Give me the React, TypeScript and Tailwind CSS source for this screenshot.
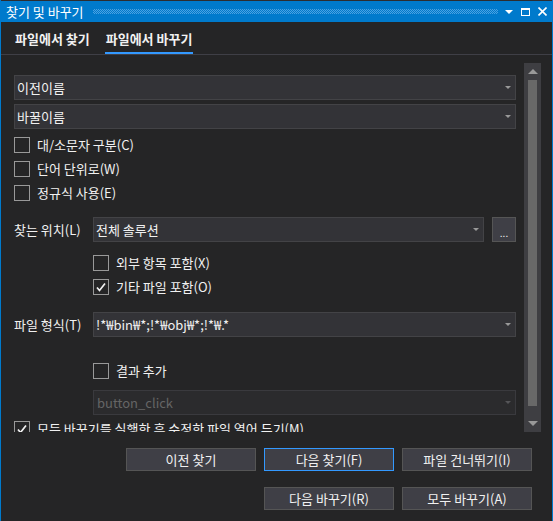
import React from 'react';

const font = "font-['Noto_Sans_CJK_KR','Noto_Sans',sans-serif]";

function Arrow({ disabled }: { disabled?: boolean }) {
  return (
    <span
      className={`h-0 w-0 border-x-[3px] border-t-[3px] border-x-transparent ${
        disabled ? 'border-t-[#555558]' : 'border-t-[#999999]'
      }`}
    />
  );
}

function Combo({ value, className = '', disabled }: { value: string; className?: string; disabled?: boolean }) {
  return (
    <div
      className={`flex h-[25px] shrink-0 items-center justify-between border pl-[2px] pr-[4px] ${
        disabled ? 'border-[#3a3a3e] bg-[#2b2b2d] text-[#656565]' : 'border-[#434346] bg-[#333337] text-[#f1f1f1]'
      } ${className}`}
    >
      <span className="whitespace-nowrap leading-[16px]">{value}</span>
      <Arrow disabled={disabled} />
    </div>
  );
}

function Check({ label, checked }: { label: string; checked?: boolean }) {
  return (
    <div className="flex h-[24px] shrink-0 items-center gap-[7px]">
      <span className="flex h-4 w-4 shrink-0 items-center justify-center border border-[#999999]">
        {checked && (
          <svg width="12" height="12" viewBox="0 0 12 12" fill="none">
            <path d="M2 6.5 L4.5 9.5 L10 2.5" stroke="#f1f1f1" strokeWidth="1.7" />
          </svg>
        )}
      </span>
      <span className="whitespace-nowrap leading-[16px]">{label}</span>
    </div>
  );
}

function Btn({ label, focused }: { label: string; focused?: boolean }) {
  return (
    <button
      className={`flex h-[23px] w-[130px] items-center justify-center border bg-[#3f3f46] leading-[16px] text-[#f1f1f1] ${
        focused ? 'border-[#3399ff]' : 'border-[#555555]'
      }`}
    >
      {label}
    </button>
  );
}

export default function App() {
  return (
    <div className={`${font} flex h-[521px] w-[553px] flex-col overflow-hidden border-x border-[#007acc] bg-[#252526] text-[13px] text-[#f1f1f1]`}>
      <div className="h-px shrink-0 bg-[#2d2d30]" />

      {/* title bar */}
      <div className="flex h-[21px] shrink-0 items-center bg-[#007acc] pl-[5px] pr-[5px] text-white">
        <span className="leading-[16px]">찾기 및 바꾸기</span>
        <div className="ml-[9px] mr-[7px] h-[5px] flex-1 bg-[conic-gradient(#4ba2e2_25%,transparent_0_50%,#4ba2e2_0_75%,transparent_0)] bg-[length:2px_2px]" />
        <span className="h-0 w-0 border-x-[4px] border-t-[4px] border-x-transparent border-t-white" />
        <span className="ml-[8px] h-[8px] w-[9px] border border-t-2 border-white" />
        <svg className="ml-[8px]" width="9" height="9" viewBox="0 0 9 9">
          <path d="M0.5 0.5 L8.5 8.5 M8.5 0.5 L0.5 8.5" stroke="white" strokeWidth="1.6" />
        </svg>
      </div>

      {/* tabs */}
      <div className="flex h-[33px] shrink-0 items-end gap-[14px] border-b border-[#3f3f46] pl-[13px] font-bold">
        <div className="border-b-2 border-transparent px-px pb-[5px] leading-[16px]">파일에서 찾기</div>
        <div className="border-b-2 border-[#3399ff] px-px pb-[5px] leading-[16px]">파일에서 바꾸기</div>
      </div>

      {/* scroll area */}
      <div className="mt-[8px] flex h-[369px] shrink-0">
        <div className="flex min-w-0 flex-1 flex-col overflow-hidden pl-[13px] pr-[8px] pt-[12px]">
          <Combo value="이전이름" />
          <Combo value="바꿀이름" className="mt-[4px]" />
          <div className="mt-[4px] flex shrink-0 flex-col">
            <Check label="대/소문자 구분(C)" />
            <Check label="단어 단위로(W)" />
            <Check label="정규식 사용(E)" />
          </div>

          <div className="mt-[12px] flex shrink-0 items-center">
            <span className="w-[79px] leading-[16px]">찾는 위치(L)</span>
            <Combo value="전체 솔루션" className="flex-1" />
            <div className="ml-[8px] flex h-[25px] w-[24px] items-end justify-center border border-[#555555] bg-[#3f3f46] pb-[3px] text-[10px] leading-[10px]">
              ...
            </div>
          </div>
          <div className="mt-[9px] flex shrink-0 flex-col pl-[79px]">
            <Check label="외부 항목 포함(X)" />
            <Check label="기타 파일 포함(O)" checked />
          </div>

          <div className="mt-[13px] flex shrink-0 items-center">
            <span className="w-[79px] leading-[16px]">파일 형식(T)</span>
            <Combo value="!*₩bin₩*;!*₩obj₩*;!*₩.*" className="flex-1" />
          </div>

          <div className="mt-[22px] shrink-0 pl-[79px]">
            <Check label="결과 추가" />
          </div>
          <div className="mt-[7px] shrink-0 pl-[79px]">
            <Combo value="button_click" disabled className="pl-[3px]" />
          </div>
          <div className="mt-[2px] shrink-0">
            <Check label="모든 바꾸기를 실행한 후 수정한 파일 열어 두기(M)" checked />
          </div>
        </div>

        {/* scrollbar */}
        <div className="mr-[11px] flex w-[17px] flex-col bg-[#3e3e42]">
          <div className="flex h-[17px] items-center justify-center">
            <span className="h-0 w-0 border-x-[5px] border-b-[5px] border-x-transparent border-b-[#999999]" />
          </div>
          <div className="mx-[4px] h-[326px] bg-[#686868]" />
          <div className="flex-1" />
          <div className="flex h-[17px] items-center justify-center">
            <span className="h-0 w-0 border-x-[5px] border-t-[5px] border-x-transparent border-t-[#999999]" />
          </div>
        </div>
      </div>

      {/* buttons */}
      <div className="mt-[16px] flex shrink-0 justify-end gap-[8px] pr-[20px]">
        <Btn label="이전 찾기" />
        <Btn label="다음 찾기(F)" focused />
        <Btn label="파일 건너뛰기(I)" />
      </div>
      <div className="mt-[16px] flex shrink-0 justify-end gap-[8px] pr-[20px]">
        <Btn label="다음 바꾸기(R)" />
        <Btn label="모두 바꾸기(A)" />
      </div>
    </div>
  );
}
